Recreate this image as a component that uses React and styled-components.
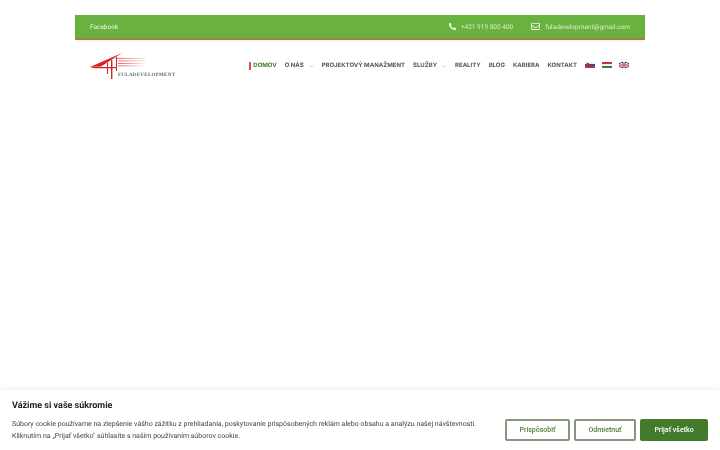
import React from "react";
import styled, { createGlobalStyle } from "styled-components";
import { FaPhoneAlt, FaRegEnvelope } from "react-icons/fa";
import { FiChevronDown } from "react-icons/fi";

const GlobalStyle = createGlobalStyle`
  html, body {
    margin: 0;
    padding: 0;
    height: 100%;
    background: #fff;
    font-family: Roboto, "Liberation Sans", sans-serif;
    text-rendering: geometricPrecision;
  }
`;

const navItems = [
  { label: "DOMOV", active: true },
  { label: "O NÁS", caret: true },
  { label: "PROJEKTOVÝ MANAŽMENT" },
  { label: "SLUŽBY", caret: true },
  { label: "REALITY" },
  { label: "BLOG" },
  { label: "KARIERA" },
  { label: "KONTAKT" },
];

function Logo() {
  return (
    <LogoWrap>
      <svg width="86" height="28" viewBox="0 0 86 28">
        <defs>
          <linearGradient id="fade" x1="0" x2="1" y1="0" y2="0">
            <stop offset="0" stopColor="#e0262c" stopOpacity="0.9" />
            <stop offset="1" stopColor="#e0262c" stopOpacity="0.05" />
          </linearGradient>
        </defs>
        <path d="M0 15 L32 1 L11 14.5 Z" fill="#d81f28" />
        <path d="M0 15 H26 V16.2 H5 Z" fill="#d81f28" />
        <rect x="26" y="6" width="32" height="0.8" fill="url(#fade)" />
        <rect x="28" y="8.5" width="30" height="0.8" fill="url(#fade)" />
        <rect x="28" y="11" width="28" height="0.8" fill="url(#fade)" />
        <rect x="28" y="13.5" width="26" height="0.8" fill="url(#fade)" />
        <path d="M17 11 H18 V22 H17 Z" fill="#d81f28" />
        <path d="M21 8 H22.4 V27 H21 Z" fill="#d81f28" />
        <path d="M26 5 H27 V19 H26 Z" fill="#d81f28" />
      </svg>
      <LogoText>FULADEVELOPMENT</LogoText>
    </LogoWrap>
  );
}

function FlagSk() {
  return (
    <svg width="10" height="6" viewBox="0 0 10 6">
      <rect width="10" height="2" fill="#eef0f5" />
      <rect y="2" width="10" height="2" fill="#2b4fa8" />
      <rect y="4" width="10" height="2" fill="#d8232f" />
      <rect x="1.5" y="1" width="2.6" height="3.4" fill="#d8232f" />
    </svg>
  );
}

function FlagHu() {
  return (
    <svg width="10" height="6" viewBox="0 0 10 6">
      <rect width="10" height="2" fill="#c8323c" />
      <rect y="2" width="10" height="2" fill="#f1f1ef" />
      <rect y="4" width="10" height="2" fill="#3f7a4a" />
    </svg>
  );
}

function FlagEn() {
  return (
    <svg width="10" height="6" viewBox="0 0 10 6">
      <rect width="10" height="6" fill="#33406f" />
      <path d="M0 0 L10 6 M10 0 L0 6" stroke="#f3e6e8" strokeWidth="1.1" />
      <path d="M5 0 V6 M0 3 H10" stroke="#f3e6e8" strokeWidth="2" />
      <path d="M5 0 V6 M0 3 H10" stroke="#cf2b3a" strokeWidth="1" />
    </svg>
  );
}

export default function App() {
  return (
    <>
      <GlobalStyle />
      <Page>
        <TopBar>
          <TopLink>Facebook</TopLink>
          <Contacts>
            <Contact>
              <FaPhoneAlt size={7} />
              <span>+421 919 800 400</span>
            </Contact>
            <Contact>
              <FaRegEnvelope size={9} />
              <span>fuladevelopment@gmail.com</span>
            </Contact>
          </Contacts>
        </TopBar>
        <Header>
          <Logo />
          <Nav>
            {navItems.map((item) => (
              <NavItem key={item.label} $active={item.active}>
                {item.label}
                {item.caret && <Caret />}
              </NavItem>
            ))}
            <Flags>
              <FlagSk />
              <FlagHu />
              <FlagEn />
            </Flags>
          </Nav>
        </Header>
      </Page>
      <CookieBanner>
        <CookieText>
          <CookieTitle>Vážime si vaše súkromie</CookieTitle>
          <CookieBody>
            Súbory cookie používame na zlepšenie vášho zážitku z prehliadania, poskytovanie prispôsobených reklám alebo obsahu a analýzu našej návštevnosti.
            <br />
            Kliknutím na „Prijať všetko" súhlasíte s naším používaním súborov cookie.
          </CookieBody>
        </CookieText>
        <CookieActions>
          <CookieButton $width={65}>Prispôsobiť</CookieButton>
          <CookieButton $width={62}>Odmietnuť</CookieButton>
          <CookieButton $width={68} $primary>Prijať všetko</CookieButton>
        </CookieActions>
      </CookieBanner>
    </>
  );
}

const Page = styled.div`
  width: 570px;
  margin: 0 auto;
  padding-top: 15px;
  will-change: transform;
`;

const TopBar = styled.div`
  height: 23px;
  padding: 0 15px;
  display: flex;
  align-items: center;
  justify-content: space-between;
  background: #69b23f;
  border-bottom: 2px solid #a5803f;
  box-shadow: 0 1px 2px rgba(0, 0, 0, 0.08);
`;

const TopLink = styled.a`
  font-size: 6.5px;
  color: #f1f8ea;
`;

const Contacts = styled.div`
  display: flex;
  gap: 18px;
`;

const Contact = styled.div`
  display: flex;
  align-items: center;
  gap: 5px;
  font-size: 6.5px;
  color: #dcebd0;

  svg {
    color: #f1f8ea;
  }
`;

const Header = styled.div`
  height: 50px;
  padding: 0 16px 0 15px;
  display: flex;
  align-items: center;
  justify-content: space-between;
`;

const LogoWrap = styled.div`
  position: relative;
  width: 86px;
  height: 28px;
  margin-top: 1px;
`;

const LogoText = styled.span`
  position: absolute;
  left: 28px;
  bottom: 2px;
  font-family: "Liberation Serif", serif;
  font-size: 5px;
  font-weight: 700;
  letter-spacing: 0.3px;
  color: #52705c;
`;

const Nav = styled.nav`
  display: flex;
  align-items: center;
  gap: 8px;
  padding-top: 2px;
`;

const NavItem = styled.a`
  display: flex;
  align-items: center;
  padding-left: ${(p) => (p.$active ? "2px" : "0")};
  border-left: ${(p) => (p.$active ? "2px solid #e0484d" : "none")};
  font-family: Inter, "Liberation Sans", sans-serif;
  font-size: 6px;
  line-height: 8px;
  font-weight: 700;
  color: ${(p) => (p.$active ? "#3f7a2a" : "#555")};
  white-space: nowrap;
`;

const Caret = styled(FiChevronDown)`
  width: 5px;
  height: 5px;
  margin-left: 5px;
  color: #777;
`;

const Flags = styled.div`
  display: flex;
  align-items: center;
  gap: 7px;
  margin-bottom: 3px;
`;

const CookieBanner = styled.div`
  position: fixed;
  left: 0;
  right: 0;
  bottom: 0;
  height: 60px;
  padding: 0 12px;
  box-sizing: border-box;
  display: flex;
  align-items: center;
  justify-content: space-between;
  background: #fff;
  box-shadow: 0 0 6px rgba(0, 0, 0, 0.12);
`;

const CookieText = styled.div`
  display: flex;
  flex-direction: column;
  gap: 5px;
  will-change: transform;
`;

const CookieTitle = styled.div`
  font-size: 9px;
  line-height: 14px;
  font-weight: 700;
  color: #212121;
`;

const CookieBody = styled.p`
  margin: 0;
  font-size: 7px;
  line-height: 12px;
  color: #444;
`;

const CookieActions = styled.div`
  display: flex;
  gap: 4px;
  margin-top: 19px;
  will-change: transform;
`;

const CookieButton = styled.button`
  width: ${(p) => p.$width}px;
  height: 22px;
  padding: 0;
  border: 2px solid ${(p) => (p.$primary ? "#437a2c" : "#87957f")};
  border-radius: 2px;
  background: ${(p) => (p.$primary ? "#437a2c" : "#fff")};
  color: ${(p) => (p.$primary ? "#fff" : "#4f8038")};
  font-family: Roboto, sans-serif;
  font-size: 7px;
  font-weight: 500;
`;
